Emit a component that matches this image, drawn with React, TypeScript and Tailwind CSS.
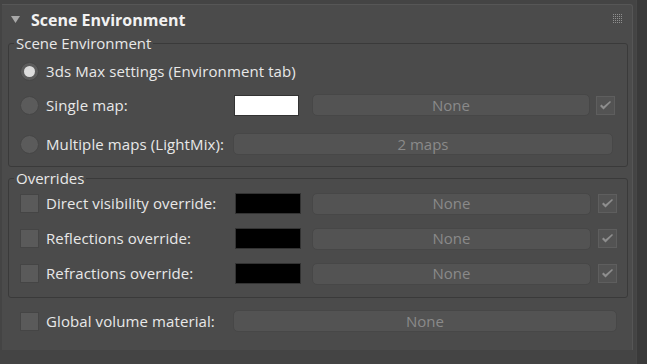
import React from "react";

const font = { fontFamily: '"Open Sans", "Noto Sans", sans-serif' };

function Radio({ checked }: { checked?: boolean }) {
  return (
    <div className="w-[19px] h-[19px] rounded-full bg-[#5b5b5b] border border-[#464646] flex items-center justify-center shrink-0">
      {checked && <div className="w-[11px] h-[11px] rounded-full bg-[#dcdcdc]" />}
    </div>
  );
}

function Box() {
  return <div className="w-[19px] h-[19px] bg-[#5a5a5a] border border-[#454545] shrink-0" />;
}

function SmallCheck() {
  return (
    <div className="w-[19px] h-[19px] bg-[#535353] border border-[#5e5e5e] flex items-center justify-center shrink-0">
      <svg width="13" height="11" viewBox="0 0 13 11">
        <path d="M1 6 L4.5 9.5 L12 2 L11 1 L4.5 6.5 L2.5 4.5 Z" fill="#8e8e8e" />
      </svg>
    </div>
  );
}

function MapBtn({ text }: { text: string }) {
  return (
    <div className="flex-1 h-[22px] rounded-[5px] bg-[#535353] border border-[#474747] flex items-center justify-center text-[15px] text-[#8a8a8a]">
      {text}
    </div>
  );
}

function Legend({ text }: { text: string }) {
  return (
    <legend className="ml-[-6px] px-[2px] text-[15px] leading-[16px] text-[#e8e8e8]">{text}</legend>
  );
}

const label = "ml-[7px] text-[15px] tracking-[0.1px] text-[#e8e8e8] whitespace-nowrap";

export default function App() {
  return (
    <div className="w-[647px] h-[364px] bg-[#444444] flex" style={font}>
      <div className="pt-[4px] pl-[2px] w-[634px]">
        <div className="w-[631px] h-[346px] bg-[#4b4b4b] border-t border-r border-[#565656] rounded-tr-[3px] flex flex-col">
          {/* header */}
          <div className="h-[30px] flex items-center relative">
            <svg className="ml-[9px]" width="9" height="8" viewBox="0 0 9 8">
              <path d="M0 0 H9 L4.5 7 Z" fill="#a8a8a8" />
            </svg>
            <span className="ml-[11px] text-[16px] font-bold text-[#f2f2f2]">Scene Environment</span>
            <svg className="absolute right-[10px] top-[9px]" width="9" height="9" viewBox="0 0 9 9">
              {[0, 2, 4, 6, 8].map((y) =>
                [0, 2, 4, 6, 8].map((x) => (
                  <rect key={`${x}-${y}`} x={x} y={y} width="1" height="1" fill="#8f8f8f" />
                ))
              )}
            </svg>
          </div>
          {/* group 1 */}
          <fieldset className="ml-[6px] mr-[4px] border border-[#3a3a3a] rounded-[3px] pt-[3px] pb-[5px] pl-[11px] pr-[12px]">
            <Legend text="Scene Environment" />
            <div className="h-[34px] flex items-center">
              <Radio checked />
              <span className={label}>3ds Max settings (Environment tab)</span>
            </div>
            <div className="h-[34px] flex items-center">
              <Radio />
              <span className={`${label} w-[188px]`}>Single map:</span>
              <div className="w-[65px] h-[21px] bg-white border border-[#333] shrink-0" />
              <div className="ml-[13px] flex-1 flex">
                <MapBtn text="None" />
              </div>
              <div className="ml-[6px]">
                <SmallCheck />
              </div>
            </div>
            <div className="mt-[5px] h-[34px] flex items-center">
              <Radio />
              <span className={`${label} w-[187px]`}>Multiple maps (LightMix):</span>
              <div className="flex-1 flex mr-[2px]">
                <MapBtn text="2 maps" />
              </div>
            </div>
          </fieldset>
          {/* group 2 */}
          <fieldset className="mt-[3px] ml-[6px] mr-[4px] border border-[#3a3a3a] rounded-[3px] pb-[6px] pl-[11px] pr-[10px]">
            <Legend text="Overrides" />
            {["Direct visibility override:", "Reflections override:", "Refractions override:"].map((t) => (
              <div key={t} className="h-[35px] flex items-center">
                <Box />
                <span className={`${label} w-[189px]`}>{t}</span>
                <div className="w-[66px] h-[21px] bg-black border border-[#333] shrink-0" />
                <div className="ml-[11px] flex-1 flex">
                  <MapBtn text="None" />
                </div>
                <div className="ml-[7px]">
                  <SmallCheck />
                </div>
              </div>
            ))}
          </fieldset>
          <div className="mt-[6px] h-[34px] flex items-center pl-[18px] pr-[15px]">
            <Box />
            <span className={`${label} w-[187px]`}>Global volume material:</span>
            <div className="flex-1 flex">
              <MapBtn text="None" />
            </div>
          </div>
        </div>
      </div>
      <div className="w-[2px] bg-[#444444]" />
      <div className="flex-1 bg-[#3a3a3a] border-l border-[#474747]" />
    </div>
  );
}
